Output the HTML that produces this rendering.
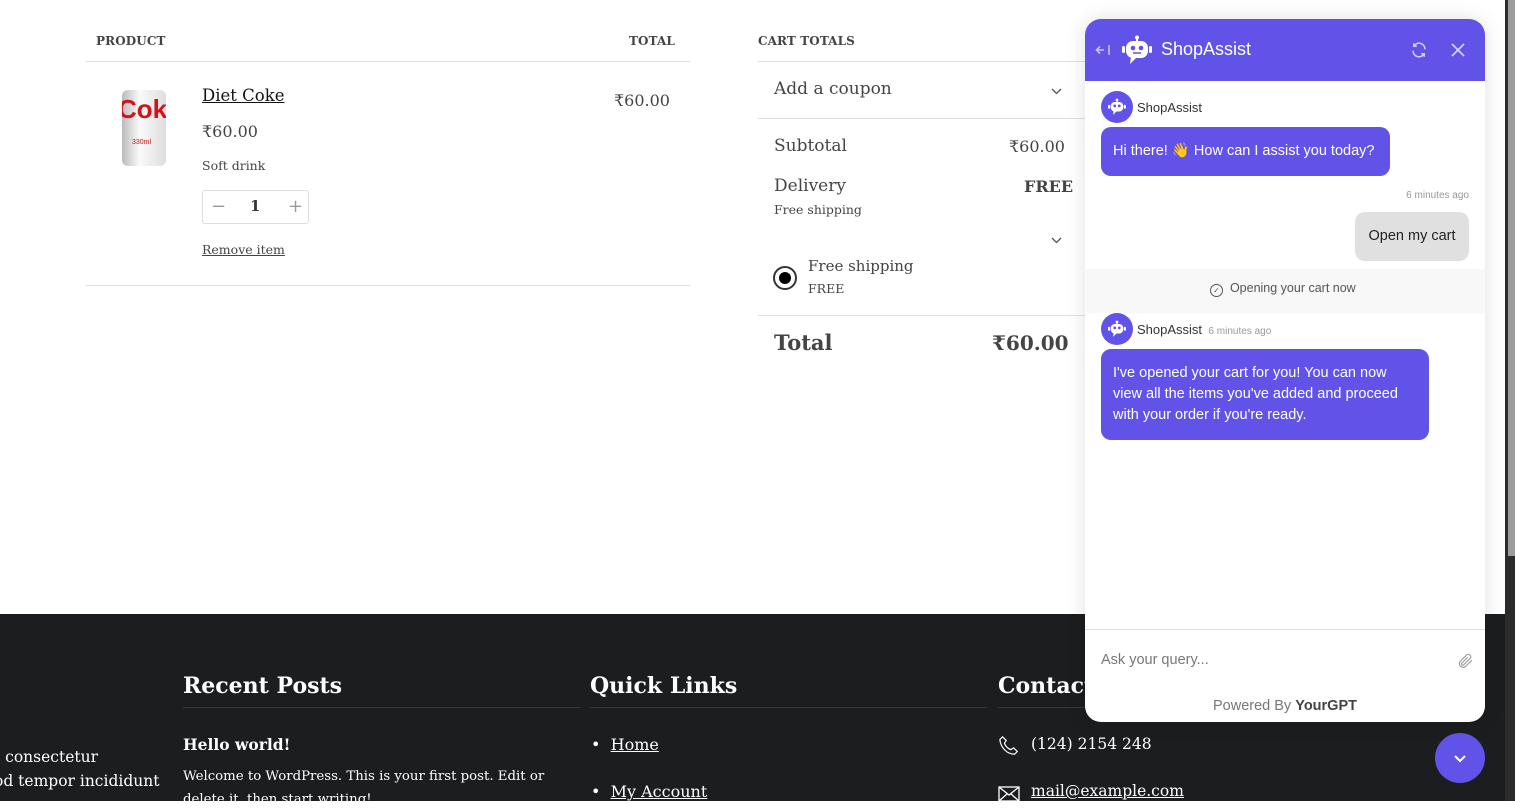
<!DOCTYPE html>
<html><head><meta charset="utf-8"><style>
*{box-sizing:border-box;margin:0;padding:0}
body{width:1515px;height:801px;overflow:hidden;background:#fff;position:relative;font-family:"DejaVu Serif","Liberation Serif",serif;color:#333}
.a{position:absolute;white-space:nowrap}
.sm{font-size:12px;font-weight:bold;color:#444;letter-spacing:.1px}
.line{position:absolute;height:1px;background:#e0e0e0}
.ui{font-family:"Liberation Sans","DejaVu Sans",sans-serif}
footer{position:absolute;left:0;top:614px;width:1505px;height:187px;background:#1c1d1f;color:#fff}
footer .h{font-size:22px;font-weight:bold;position:absolute;top:59px}
footer .u{position:absolute;top:93px;height:1px;background:#0e4b47}
#chat{position:absolute;left:1085px;top:19px;width:400px;height:703px;background:#fff;border-radius:16px;overflow:hidden;box-shadow:0 0 20px rgba(0,0,0,.12)}
.hd{height:62px;background:#6253e8;color:#fff}
.bub{position:absolute;background:#6253e8;color:#fff;font-size:14.5px;border-radius:10px;padding:0 12px;line-height:21px;white-space:normal}
.av{position:absolute;width:32px;height:32px;border-radius:50%;background:#6253e8}
.av svg{position:absolute;left:7px;top:7px}
</style></head><body>
<div class="a sm" style="left:96px;top:34px">PRODUCT</div>
<div class="a sm" style="left:629px;top:34px">TOTAL</div>
<div class="line" style="left:86px;top:61px;width:604px"></div>
<div class="a" style="left:122px;top:90px;width:44px;height:76px;border-radius:6px;background:linear-gradient(90deg,#bbb,#fafafa 40%,#ddd);overflow:hidden"><div style="color:#d2141a;font-weight:bold;font-size:26px;font-family:'Liberation Sans';margin:4px 0 0 -4px">Cok</div><div style="color:#d2141a;font-size:7px;margin:14px 0 0 10px;font-family:'Liberation Sans'">330ml</div></div>
<div class="a" style="left:202px;top:86px;font-size:16.5px;color:#111;text-decoration:underline">Diet Coke</div>
<div class="a" style="left:202px;top:122px;font-size:16px;color:#444">₹60.00</div>
<div class="a" style="left:202px;top:158px;font-size:12.5px;color:#444">Soft drink</div>
<div class="a" style="left:202px;top:190px;width:107px;height:34px;border:1px solid #ddd;border-radius:3px"><span class="a" style="left:8px;top:5px;color:#999;font-size:18px">−</span><span class="a" style="left:47px;top:6px;font-weight:bold;font-size:15px;color:#333">1</span><span class="a" style="left:85px;top:5px;color:#999;font-size:18px">+</span></div>
<div class="a" style="left:202px;top:242px;font-size:12.5px;color:#444;text-decoration:underline">Remove item</div>
<div class="a" style="left:614px;top:91px;font-size:16px;color:#444">₹60.00</div>
<div class="line" style="left:86px;top:285px;width:604px"></div>

<div class="a sm" style="left:758px;top:34px">CART TOTALS</div>
<div class="line" style="left:758px;top:61px;width:330px"></div>
<div class="a" style="left:774px;top:79px;font-size:17px;color:#444">Add a coupon</div>
<svg class="a" style="left:1051px;top:88px" width="11" height="7" viewBox="0 0 11 7" fill="none" stroke="#555" stroke-width="1.3"><path d="M1 1l4.5 4.5L10 1"/></svg>
<div class="line" style="left:758px;top:118px;width:330px"></div>
<div class="a" style="left:774px;top:136px;font-size:17px;color:#444">Subtotal</div>
<div class="a" style="left:1009px;top:137px;font-size:16px;color:#444">₹60.00</div>
<div class="a" style="left:774px;top:176px;font-size:17px;color:#444">Delivery</div>
<div class="a" style="left:1024px;top:177px;font-size:16px;font-weight:bold;color:#444">FREE</div>
<div class="a" style="left:774px;top:202px;font-size:12.5px;color:#444">Free shipping</div>
<svg class="a" style="left:1051px;top:237px" width="11" height="7" viewBox="0 0 11 7" fill="none" stroke="#555" stroke-width="1.3"><path d="M1 1l4.5 4.5L10 1"/></svg>
<div class="a" style="left:773px;top:266px;width:24px;height:24px;border:2px solid #333;border-radius:50%"><div style="width:12px;height:12px;background:#000;border-radius:50%;margin:4px"></div></div>
<div class="a" style="left:808px;top:257px;font-size:15px;color:#444">Free shipping</div>
<div class="a" style="left:808px;top:281px;font-size:12.5px;color:#444">FREE</div>
<div class="line" style="left:758px;top:315px;width:330px"></div>
<div class="a" style="left:774px;top:330px;font-size:21px;font-weight:bold;color:#444">Total</div>
<div class="a" style="left:992px;top:331px;font-size:20px;font-weight:bold;color:#444">₹60.00</div>

<footer>
<div class="a" style="left:-6px;top:134px;font-size:15.5px">t consectetur</div>
<div class="a" style="left:-6px;top:158px;font-size:15.5px">od tempor incididunt</div>
<div class="h a" style="left:183px">Recent Posts</div><div class="u" style="left:183px;width:397px"></div>
<div class="h a" style="left:590px">Quick Links</div><div class="u" style="left:590px;width:397px"></div>
<div class="h a" style="left:998px">Contact</div><div class="u" style="left:998px;width:100px"></div>
<div class="a" style="left:183px;top:121px;font-size:15.5px;font-weight:bold">Hello world!</div>
<div class="a" style="left:183px;top:151px;font-size:13.3px;line-height:23px">Welcome to WordPress. This is your first post. Edit or<br>delete it, then start writing!</div>
<div class="a" style="left:591px;top:121px;font-size:16px">•&nbsp;&nbsp;<u>Home</u></div>
<div class="a" style="left:591px;top:168px;font-size:16px">•&nbsp;&nbsp;<u>My Account</u></div>
<svg class="a" style="left:998px;top:121px" width="22" height="22" viewBox="0 0 24 24" fill="none" stroke="#fff" stroke-width="1.3"><path d="M5 2l4 4-2 3c1 3 4 6 7 7l3-2 4 4-3 3C10 21 3 14 2 5z"/></svg>
<div class="a" style="left:1031px;top:121px;font-size:15.5px">(124) 2154 248</div>
<svg class="a" style="left:998px;top:172px" width="22" height="16" viewBox="0 0 22 16" fill="none" stroke="#fff" stroke-width="1.3"><rect x="1" y="1" width="20" height="14"/><path d="M1 1l10 8 10-8M1 15l8-7M21 15l-8-7"/></svg>
<div class="a" style="left:1031px;top:168px;font-size:15.5px;text-decoration:underline">mail@example.com</div>
</footer>
<div class="a" style="left:1505px;top:0;width:10px;height:801px;background:#2b2b2b"></div>
<div class="a" style="left:1508px;top:0;width:7px;height:556px;background:#9c9c9c"></div>

<div id="chat" class="ui">
<div class="hd" style="position:relative">
<svg class="a" style="left:10px;top:23px" width="16" height="16" viewBox="0 0 16 16" fill="none" stroke="#c8c2f8" stroke-width="1.6"><path d="M9 8H2M5 4.5L1.5 8 5 11.5M14 3v10"/></svg>
<svg class="a" style="left:36px;top:16px" width="32" height="30" viewBox="0 0 32 30" fill="#fff"><circle cx="16" cy="2.5" r="2"/><rect x="15" y="3" width="2" height="4"/><rect x="5" y="6" width="22" height="17" rx="7"/><rect x="1" y="11" width="3" height="7" rx="1.5"/><rect x="28" y="11" width="3" height="7" rx="1.5"/><path d="M10 22l-1 7 6-6z"/><circle cx="12" cy="13" r="2.3" fill="#6253e8"/><circle cx="20" cy="13" r="2.3" fill="#6253e8"/><path d="M12 18h8" stroke="#6253e8" stroke-width="1.5"/></svg>
<div class="a" style="left:76px;top:20px;font-size:18px;color:#fff">ShopAssist</div>
<svg class="a" style="left:325px;top:22px" width="18" height="18" viewBox="0 0 24 24" fill="none" stroke="#d5d0fa" stroke-width="2"><path d="M20 11A8 8 0 0 0 5 7M4 13a8 8 0 0 0 15 4M5 3v4h4M19 21v-4h-4"/></svg>
<svg class="a" style="left:366px;top:24px" width="14" height="14" viewBox="0 0 14 14" stroke="#d5d0fa" stroke-width="1.8"><path d="M1 1l12 12M13 1L1 13"/></svg>
</div>
<div class="av" style="left:16px;top:72px"><svg width="18" height="18" viewBox="0 0 32 30" fill="#fff"><circle cx="16" cy="2.5" r="2.5"/><rect x="15" y="3" width="2" height="4"/><rect x="5" y="6" width="22" height="17" rx="7"/><rect x="0" y="11" width="4" height="7" rx="2"/><rect x="28" y="11" width="4" height="7" rx="2"/><path d="M10 22l-1 7 6-6z"/><circle cx="12" cy="13" r="2.5" fill="#6253e8"/><circle cx="20" cy="13" r="2.5" fill="#6253e8"/></svg></div>
<div class="a" style="left:52px;top:81px;font-size:13px;color:#333">ShopAssist</div>
<div class="bub" style="left:16px;top:108px;width:289px;height:49px;line-height:49px">Hi there! 👋 How can I assist you today?</div>
<div class="a" style="right:16px;top:171px;font-size:10px;color:#999">6 minutes ago</div>
<div class="a" style="left:270px;top:193px;width:114px;height:49px;background:#e0e0e0;border-radius:10px;font-size:14.5px;color:#222;line-height:49px;text-align:center">Open my cart</div>
<div class="a" style="left:0;top:250px;width:400px;height:44px;background:#f8f8f8"></div>
<div class="a" style="left:125px;top:262px;font-size:12.5px;color:#555"><span style="display:inline-block;width:13px;height:13px;border:1px solid #555;border-radius:50%;font-size:8px;text-align:center;line-height:11px;vertical-align:-1px">✓</span>&nbsp; Opening your cart now</div>
<div class="av" style="left:16px;top:294px"><svg width="18" height="18" viewBox="0 0 32 30" fill="#fff"><circle cx="16" cy="2.5" r="2.5"/><rect x="15" y="3" width="2" height="4"/><rect x="5" y="6" width="22" height="17" rx="7"/><rect x="0" y="11" width="4" height="7" rx="2"/><rect x="28" y="11" width="4" height="7" rx="2"/><path d="M10 22l-1 7 6-6z"/><circle cx="12" cy="13" r="2.5" fill="#6253e8"/><circle cx="20" cy="13" r="2.5" fill="#6253e8"/></svg></div>
<div class="a" style="left:52px;top:303px;font-size:13px;color:#333">ShopAssist <span style="font-size:10px;color:#999">&nbsp;6 minutes ago</span></div>
<div class="bub" style="left:16px;top:330px;width:328px;height:91px;padding:14px 18px 0 12px">I've opened your cart for you! You can now view all the items you've added and proceed with your order if you're ready.</div>
<div class="a" style="left:0;top:610px;width:400px;height:1px;background:#e0e0e0"></div>
<div class="a" style="left:16px;top:633px;font-size:14.5px;color:#777">Ask your query...</div>
<svg class="a" style="left:371px;top:632px" width="18" height="20" viewBox="0 0 24 24" fill="none" stroke="#999" stroke-width="1.5"><path d="M21 11l-8.5 8.5a5 5 0 0 1-7-7L14 4a3.3 3.3 0 0 1 4.7 4.7L10.2 17.2a1.7 1.7 0 0 1-2.4-2.4L15.5 7"/></svg>
<div class="a" style="left:0;width:400px;text-align:center;top:679px;font-size:14.5px;color:#777">Powered By <b style="color:#444">YourGPT</b></div>
</div>
<div class="a" style="left:1435px;top:733px;width:50px;height:50px;border-radius:50%;background:#6253e8"><svg style="position:absolute;left:19px;top:22px" width="12" height="8" viewBox="0 0 12 8" fill="none" stroke="#fff" stroke-width="2"><path d="M1 1l5 5 5-5"/></svg></div>
</body></html>
